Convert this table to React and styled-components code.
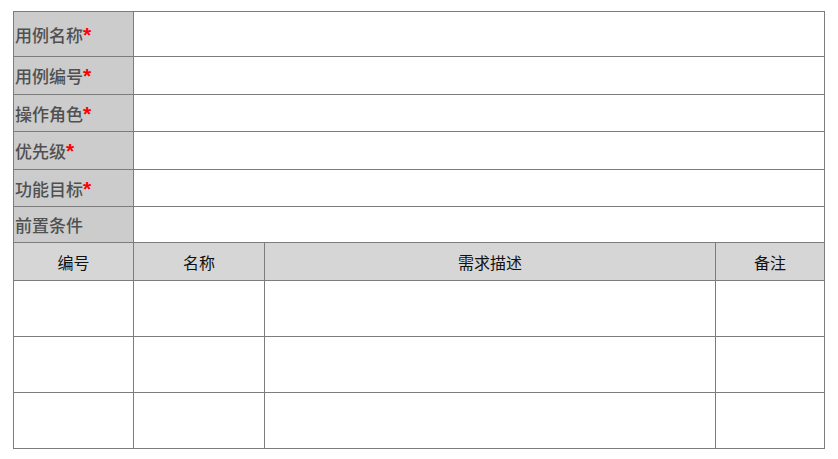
import React from 'react';
import styled, { createGlobalStyle } from 'styled-components';

const GlobalStyle = createGlobalStyle`
    body {
        margin: 0;
        background: #fff;
        font-family: "Liberation Sans", "Noto Sans CJK SC", sans-serif;
    }
`;

const Page = styled.div`
    padding: 11px 0 0 13px;
`;

const Table = styled.table`
    border-collapse: collapse;
    table-layout: fixed;
    width: 811px;
    font-size: 16px;
`;

const Row = styled.tr`
    height: ${({ h }) => h}px;
`;

const Label = styled.td`
    background: #cccccc;
    border: 1px solid #7c7c7c;
    color: #505050;
    font-size: 17px;
    font-weight: 500;
    padding: 0 0 0 1px;
    white-space: nowrap;
`;

const Required = styled.span`
    color: #ff0000;
    font-weight: bold;
    font-size: 21px;
    line-height: 1;
`;

const Field = styled.td`
    background: #fff;
    border: 1px solid #7c7c7c;
`;

const Head = styled.th`
    background: #d6d6d6;
    border: 1px solid #7c7c7c;
    color: #111;
    font-weight: normal;
    text-align: center;
    padding: 0;
`;

const Cell = styled.td`
    background: #fff;
    border: 1px solid #7c7c7c;
`;

const fields = [
    { label: '用例名称', required: true, h: 45 },
    { label: '用例编号', required: true, h: 38 },
    { label: '操作角色', required: true, h: 37 },
    { label: '优先级', required: true, h: 38 },
    { label: '功能目标', required: true, h: 37 },
    { label: '前置条件', required: false, h: 36 },
];

const columns = ['编号', '名称', '需求描述', '备注'];

export default function App() {
    return (
        <Page>
            <GlobalStyle />
            <Table>
                <colgroup>
                    <col style={{ width: 120 }} />
                    <col style={{ width: 131 }} />
                    <col style={{ width: 451 }} />
                    <col style={{ width: 109 }} />
                </colgroup>
                <tbody>
                    {fields.map((f) => (
                        <Row h={f.h} key={f.label}>
                            <Label>
                                {f.label}
                                {f.required ? <Required>*</Required> : null}
                            </Label>
                            <Field colSpan={3} />
                        </Row>
                    ))}
                    <Row h={38}>
                        {columns.map((c) => (
                            <Head key={c}>{c}</Head>
                        ))}
                    </Row>
                    {[0, 1, 2].map((i) => (
                        <Row h={56} key={i}>
                            <Cell />
                            <Cell />
                            <Cell />
                            <Cell />
                        </Row>
                    ))}
                </tbody>
            </Table>
        </Page>
    );
}
